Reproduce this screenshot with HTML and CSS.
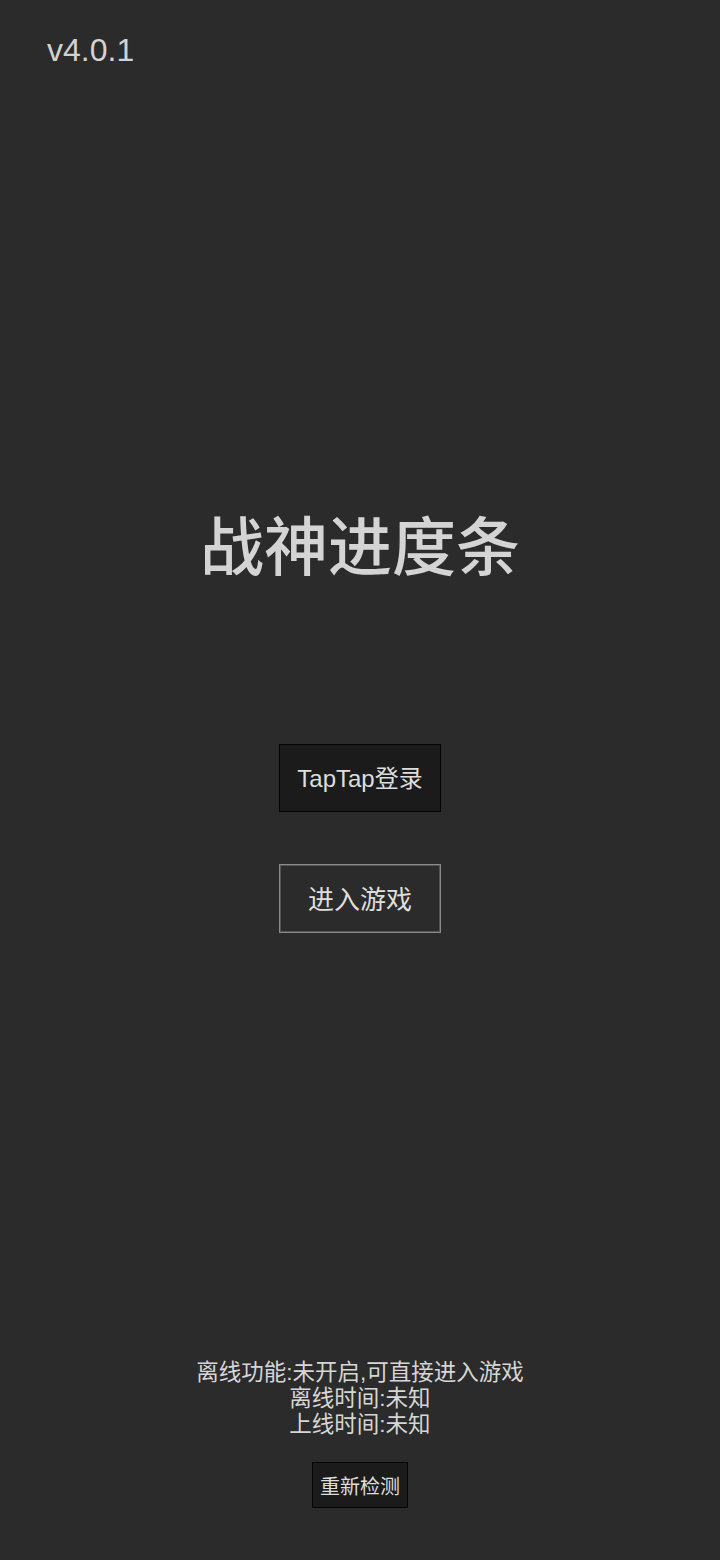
FILE: index.html
```html
<!DOCTYPE html>
<html lang="zh-CN">
<head>
<meta charset="utf-8">
<title>战神进度条</title>
<link rel="stylesheet" href="styles.css">
</head>
<body>
<div class="screen">
  <div class="version">v4.0.1</div>
  <h1 class="title">战神进度条</h1>
  <div class="actions">
    <button class="btn btn-dark">TapTap登录</button>
    <button class="btn btn-outline">进入游戏</button>
  </div>
  <div class="info">
    <div>离线功能:未开启,可直接进入游戏</div>
    <div>离线时间:未知</div>
    <div>上线时间:未知</div>
  </div>
  <div class="recheck-wrap">
    <button class="btn btn-small">重新检测</button>
  </div>
</div>
</body>
</html>
```

FILE: styles.css
```css
html, body {
  margin: 0;
  padding: 0;
  background: #2b2b2b;
}
.screen {
  width: 720px;
  height: 1560px;
  display: flex;
  flex-direction: column;
  font-family: "Liberation Sans", "Noto Sans CJK SC", sans-serif;
  color: #d6d6d6;
  box-sizing: border-box;
}
.version {
  margin-top: 32px;
  padding-left: 47px;
  font-size: 32px;
  line-height: 36px;
  color: #d2d2d2;
}
.title {
  margin: 440px 0 0;
  text-align: center;
  font-size: 64px;
  line-height: 80px;
  font-weight: 500;
  color: #d4d4d4;
}
.actions {
  margin-top: 156px;
  display: flex;
  flex-direction: column;
  align-items: center;
  gap: 52px;
}
.btn {
  font-family: "Liberation Sans", "Noto Sans CJK SC", sans-serif;
  display: flex;
  align-items: center;
  justify-content: center;
  padding: 0;
  box-sizing: border-box;
  color: #dedede;
  cursor: pointer;
}
.btn-dark {
  width: 162px;
  height: 68px;
  font-size: 24px;
  padding-bottom: 4px;
  background: #1b1b1b;
  border: 1px solid #050505;
}
.btn-outline {
  width: 162px;
  height: 69px;
  font-size: 26px;
  padding-bottom: 2px;
  background: #2b2b2b;
  border: 1px solid #8a8a8a;
  box-shadow: inset 0 0 0 1px #555;
}
.info {
  margin-top: 427px;
  text-align: center;
  font-size: 22.5px;
  line-height: 26px;
  color: #d6d6d6;
}
.recheck-wrap {
  margin-top: 24px;
  display: flex;
  justify-content: center;
}
.btn-small {
  width: 96px;
  height: 46px;
  font-size: 20px;
  background: #1b1b1b;
  border: 1px solid #050505;
}
```
